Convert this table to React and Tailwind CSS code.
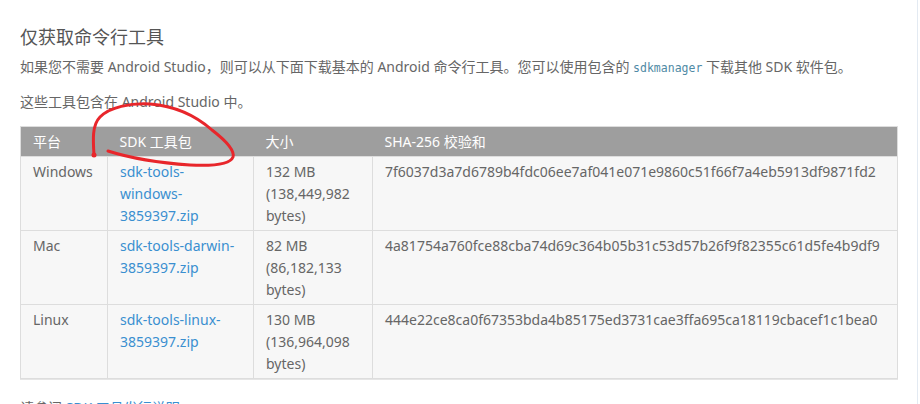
import React from "react";

const rows = [
  {
    platform: "Windows",
    file: ["sdk-tools-", "windows-", "3859397.zip"],
    size: ["132 MB", "(138,449,982", "bytes)"],
    sha: "7f6037d3a7d6789b4fdc06ee7af041e071e9860c51f66f7a4eb5913df9871fd2",
  },
  {
    platform: "Mac",
    file: ["sdk-tools-darwin-", "3859397.zip"],
    size: ["82 MB", "(86,182,133", "bytes)"],
    sha: "4a81754a760fce88cba74d69c364b05b31c53d57b26f9f82355c61d5fe4b9df9",
  },
  {
    platform: "Linux",
    file: ["sdk-tools-linux-", "3859397.zip"],
    size: ["130 MB", "(136,964,098", "bytes)"],
    sha: "444e22ce8ca0f67353bda4b85175ed3731cae3ffa695ca18119cbacef1c1bea0",
  },
];

function Lines({ items }) {
  return items.map((t, i) => (
    <span key={i} className="block">
      {t}
    </span>
  ));
}

export default function App() {
  return (
    <div className="relative h-[404px] w-[920px] overflow-hidden bg-white font-['Noto_Sans','Noto_Sans_CJK_SC',sans-serif] text-[#666]">
      <div className="flex h-full">
        <div className="w-[917px] pl-[20px] pt-[26px]">
          <h2 className="text-[18px] leading-[22px] text-[#555]">仅获取命令行工具</h2>
          <p className="mt-[8px] text-[14px] leading-[22px]">
            如果您不需要 Android Studio，则可以从下面下载基本的 Android 命令行工具。您可以使用包含的{" "}
            <code className="font-['DejaVu_Sans_Mono',monospace] text-[11.5px] text-[#4f8aa5]">sdkmanager</code>{" "}
            下载其他 SDK 软件包。
          </p>
          <p className="mt-[12px] text-[14px] leading-[22px]">这些工具包含在 Android Studio 中。</p>

          <table className="mt-[13px] w-[878px] border-collapse border border-[#ddd] text-[14px] leading-[22px] shadow-[0_1px_0_#e6e6e6]">
            <thead>
              <tr className="h-[30px] bg-[#9e9e9e] text-left text-white">
                <th className="w-[87px] px-[12px] font-normal">平台</th>
                <th className="w-[146px] px-[12px] font-normal">SDK 工具包</th>
                <th className="w-[119px] px-[12px] font-normal">大小</th>
                <th className="px-[12px] font-normal">SHA-256 校验和</th>
              </tr>
            </thead>
            <tbody>
              {rows.map((r) => (
                <tr key={r.platform} className="h-[74px] border-t border-[#ddd] bg-[#f7f7f7] align-top">
                  <td className="border-r border-[#ddd] px-[12px] pt-[4px]">{r.platform}</td>
                  <td className="border-r border-[#ddd] px-[12px] pt-[4px] text-[#3a8fd0]">
                    <a href="#">
                      <Lines items={r.file} />
                    </a>
                  </td>
                  <td className="border-r border-[#ddd] px-[12px] pt-[4px]">
                    <Lines items={r.size} />
                  </td>
                  <td className="whitespace-nowrap px-[12px] pt-[4px]">{r.sha}</td>
                </tr>
              ))}
            </tbody>
          </table>

          <p className="mt-[18px] text-[14px] leading-[22px]">
            请参阅 <a href="#" className="text-[#3a8fd0]">SDK 工具发行说明</a>。
          </p>
        </div>
        <div className="w-[3px] border-l border-[#e3eaf2] bg-white" />
      </div>

      <svg className="pointer-events-none absolute left-0 top-0" width="920" height="404" viewBox="0 0 920 404">
        <path
          d="M94,155 C93,140 92,125 100,117 C110,107 130,103 150,104 C175,106 195,115 212,130 C225,140 235,150 233,157 C230,165 210,166 190,165 C160,163 130,158 108,151"
          fill="none"
          stroke="#e8262b"
          strokeWidth="3"
          strokeLinecap="round"
        />
        <circle cx="94" cy="155" r="2.5" fill="#e8262b" />
      </svg>
    </div>
  );
}
